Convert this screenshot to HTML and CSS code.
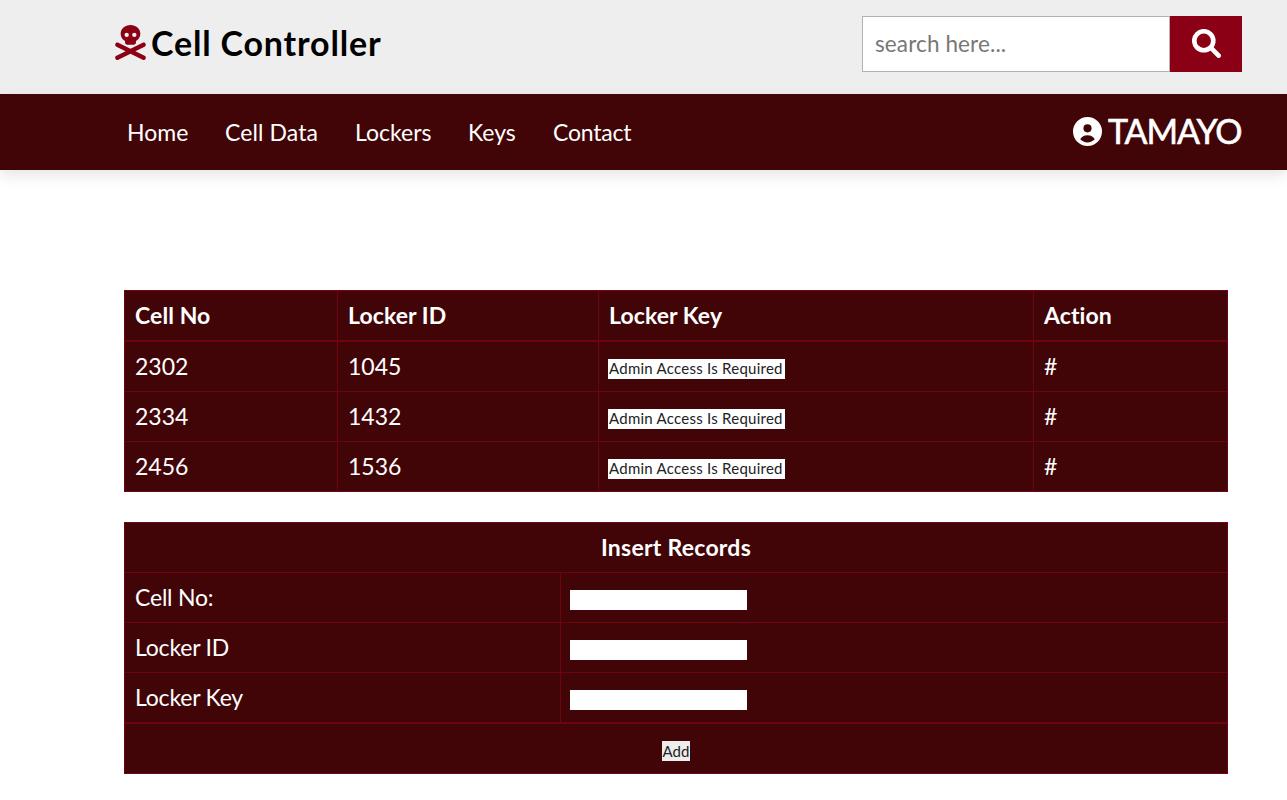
FILE: index.html
```html
<!DOCTYPE html>
<html lang="en">
<head>
<meta charset="utf-8">
<title>Cell Controller</title>
<link rel="stylesheet" href="styles.css">
</head>
<body>
<header class="topbar">
  <a class="logo">
    <svg class="skull" viewBox="0 0 448 512"><path d="M368 128c0 44.400-25.400 83.700-64 106.400V256c0 17.700-14.300 32-32 32H176c-17.700 0-32-14.300-32-32V234.400c-38.600-22.700-64-62-64-106.400C80 57.300 144.500 0 224 0s144 57.300 144 128zM168 176a32 32 0 1 0 0-64 32 32 0 1 0 0 64zm144-32a32 32 0 1 0-64 0 32 32 0 1 0 64 0zM3.400 273.700c7.900-15.800 27.100-22.200 42.900-14.300L224 348.200 401.700 259.400c15.800-7.900 35-1.500 42.900 14.300s1.500 35-14.300 42.900L295.600 384 430.300 451.400c15.800 7.900 22.200 27.100 14.300 42.900s-27.100 22.200-42.900 14.300L224 419.800 46.300 508.600c-15.800 7.900-35 1.500-42.900-14.300s-1.500-35 14.300-42.900L152.400 384 17.700 316.600C1.900 308.700-4.500 289.500 3.400 273.700z"/></svg>
    <span class="brand">Cell Controller</span>
  </a>
  <form class="search">
    <input class="search-input" type="text" placeholder="search here...">
    <button class="search-button" type="button" aria-label="Search"><svg class="lens" viewBox="0 0 512 512"><circle cx="208" cy="208" r="168"/><path d="M335 335L470 470"/></svg></button>
  </form>
</header>
<nav class="navbar">
  <div class="links">
    <a class="home">Home</a><a class="data">Cell Data</a><a class="lockers">Lockers</a><a class="keys">Keys</a><a class="contact">Contact</a>
  </div>
  <a class="user">
    <svg class="avatar" viewBox="0 0 512 512"><path fill-rule="evenodd" d="M256 0a256 256 0 1 1 0 512 256 256 0 1 1 0-512zM256 128a72 72 0 1 0 0 144 72 72 0 1 0 0-144zM256 448c50 0 96-22 128-56-18-40-60-72-128-72s-110 32-128 72c32 34 78 56 128 56z"/></svg>
    <span class="username">TAMAYO</span>
  </a>
</nav>
<main class="content">
  <table class="grid cells">
    <colgroup><col class="col-cell"><col class="col-id"><col class="col-key"><col></colgroup>
    <thead><tr><th>Cell No</th><th>Locker ID</th><th>Locker Key</th><th>Action</th></tr></thead>
    <tbody>
      <tr><td>2302</td><td>1045</td><td><input class="field" value="Admin Access Is Required"></td><td>#</td></tr>
      <tr><td>2334</td><td>1432</td><td><input class="field" value="Admin Access Is Required"></td><td>#</td></tr>
      <tr><td>2456</td><td>1536</td><td><input class="field" value="Admin Access Is Required"></td><td>#</td></tr>
    </tbody>
  </table>
  <table class="grid insert">
    <colgroup><col class="col-label"><col></colgroup>
    <thead><tr><th colspan="2">Insert Records</th></tr></thead>
    <tbody>
      <tr><td class="label">Cell No:</td><td><input class="field"></td></tr>
      <tr><td class="label">Locker ID</td><td><input class="field"></td></tr>
      <tr><td class="label">Locker Key</td><td><input class="field"></td></tr>
    </tbody>
    <tfoot><tr><td colspan="2"><button class="add" type="button">Add</button></td></tr></tfoot>
  </table>
</main>
</body>
</html>
```
FILE: styles.css
```css
* { box-sizing: border-box; }
body {
  margin: 0;
  background: #fff;
  font-family: Lato, "Open Sans", sans-serif;
  font-size: 23px;
  font-variant-ligatures: none;
}
input, button { font-family: inherit; border: 0; border-radius: 0; outline: 0; margin: 0; }
.topbar {
  height: 94px;
  padding: 0 45px 6px 115px;
  background: #eee;
  display: flex;
  align-items: center;
  justify-content: space-between;
}
.logo { display: flex; align-items: center; gap: 5px; }
.skull { width: 31px; height: 35px; fill: #8b0015; margin-top: -3px; }
.brand { font-size: 34px; line-height: 46px; margin-top: -2px; font-weight: 700; letter-spacing: 0.82px; color: #000; }
.search { display: flex; width: 380px; height: 56px; }
.search-input {
  width: 308px;
  padding: 0 12px 2px;
  border: 1px solid #b2b2b2;
  background: #fff;
  font-size: 22.5px;
  letter-spacing: 0.12px;
}
.search-input::placeholder { color: #777; opacity: 1; }
.search-button {
  width: 72px;
  padding: 0 0 1px;
  background: #8b0015;
  display: flex;
  align-items: center;
  justify-content: center;
}
.lens { width: 29px; height: 29px; fill: none; stroke: #fff; stroke-width: 82; stroke-linecap: round; }
.navbar {
  height: 76px;
  padding: 0 45px 0 127px;
  background: #410508;
  color: #fff;
  display: flex;
  align-items: center;
  justify-content: space-between;
  box-shadow: 0 5px 14px rgba(0, 0, 0, 0.11);
}
.links { display: flex; }
.home { width: 98px; }
.data { width: 130px; letter-spacing: 0.1px; }
.lockers { width: 113px; }
.keys { width: 85px; }
.contact { letter-spacing: -0.2px; }
.user { display: flex; align-items: center; gap: 6px; margin-top: -2px; }
.avatar { width: 29px; height: 29px; fill: #fff; }
.username { font-size: 34px; line-height: 46px; width: 134px; letter-spacing: -1.1px; -webkit-text-stroke: 0.6px #fff; white-space: nowrap; }
.content { padding: 120px 59px 0 124px; }
.grid {
  width: 100%;
  table-layout: fixed;
  border-spacing: 0;
  border-right: 1px solid #710311;
  background: #410508;
  color: #fff;
}
.cells { border-bottom: 1px solid #710311; margin-bottom: 30px; }
.col-cell { width: 213px; }
.col-id { width: 261px; }
.col-key { width: 435px; }
.col-label { width: 436px; }
th, td {
  height: 50px;
  padding: 0 10px 2px;
  border: 0 solid #710311;
  border-top-width: 1px;
  border-left-width: 1px;
  text-align: left;
  line-height: 30px;
  vertical-align: middle;
}
.cells th { height: 51px; border-bottom-width: 1px; letter-spacing: 0.08px; }
.insert th { text-align: center; letter-spacing: 0.25px; }
.label { letter-spacing: -0.2px; }
.insert tbody tr:last-child td, .insert tfoot td { height: 51px; border-bottom-width: 1px; }
.insert tfoot td { text-align: center; }
.field {
  display: block;
  width: 177px;
  height: 20px;
  margin: 7px 0 0 -1px;
  padding: 0 1px 2px;
  background: #fff;
  color: #222;
  font-size: 15px;
  letter-spacing: 0.25px;
}
.add {
  display: block;
  width: 28px;
  height: 20px;
  margin: 7px auto 0;
  padding: 0 0 1px;
  background: #ededed;
  color: #222;
  font-size: 15px;
  line-height: 18px;
}
```
